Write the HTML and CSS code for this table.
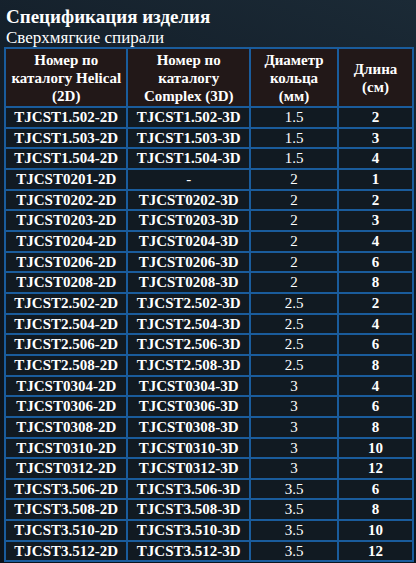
FILE: index.html
```html
<!DOCTYPE html>
<html lang="ru">
<head>
<meta charset="utf-8">
<link rel="stylesheet" href="styles.css">
</head>
<body>
<div class="page">
  <h1 class="title">Спецификация изделия</h1>
  <h2 class="subtitle">Сверхмягкие спирали</h2>
  <table class="spec">
    <thead>
      <tr>
        <th class="c1">Номер по каталогу Helical (2D)</th>
        <th class="c2">Номер по каталогу Complex (3D)</th>
        <th class="c3">Диаметр кольца (мм)</th>
        <th class="c4">Длина (см)</th>
      </tr>
    </thead>
    <tbody>
      <tr><td>TJCST1.502-2D</td><td>TJCST1.502-3D</td><td class="dia">1.5</td><td>2</td></tr>
      <tr><td>TJCST1.503-2D</td><td>TJCST1.503-3D</td><td class="dia">1.5</td><td>3</td></tr>
      <tr><td>TJCST1.504-2D</td><td>TJCST1.504-3D</td><td class="dia">1.5</td><td>4</td></tr>
      <tr><td>TJCST0201-2D</td><td class="dia">-</td><td class="dia">2</td><td>1</td></tr>
      <tr><td>TJCST0202-2D</td><td>TJCST0202-3D</td><td class="dia">2</td><td>2</td></tr>
      <tr><td>TJCST0203-2D</td><td>TJCST0203-3D</td><td class="dia">2</td><td>3</td></tr>
      <tr><td>TJCST0204-2D</td><td>TJCST0204-3D</td><td class="dia">2</td><td>4</td></tr>
      <tr><td>TJCST0206-2D</td><td>TJCST0206-3D</td><td class="dia">2</td><td>6</td></tr>
      <tr><td>TJCST0208-2D</td><td>TJCST0208-3D</td><td class="dia">2</td><td>8</td></tr>
      <tr><td>TJCST2.502-2D</td><td>TJCST2.502-3D</td><td class="dia">2.5</td><td>2</td></tr>
      <tr><td>TJCST2.504-2D</td><td>TJCST2.504-3D</td><td class="dia">2.5</td><td>4</td></tr>
      <tr><td>TJCST2.506-2D</td><td>TJCST2.506-3D</td><td class="dia">2.5</td><td>6</td></tr>
      <tr><td>TJCST2.508-2D</td><td>TJCST2.508-3D</td><td class="dia">2.5</td><td>8</td></tr>
      <tr><td>TJCST0304-2D</td><td>TJCST0304-3D</td><td class="dia">3</td><td>4</td></tr>
      <tr><td>TJCST0306-2D</td><td>TJCST0306-3D</td><td class="dia">3</td><td>6</td></tr>
      <tr><td>TJCST0308-2D</td><td>TJCST0308-3D</td><td class="dia">3</td><td>8</td></tr>
      <tr><td>TJCST0310-2D</td><td>TJCST0310-3D</td><td class="dia">3</td><td>10</td></tr>
      <tr><td>TJCST0312-2D</td><td>TJCST0312-3D</td><td class="dia">3</td><td>12</td></tr>
      <tr><td>TJCST3.506-2D</td><td>TJCST3.506-3D</td><td class="dia">3.5</td><td>6</td></tr>
      <tr><td>TJCST3.508-2D</td><td>TJCST3.508-3D</td><td class="dia">3.5</td><td>8</td></tr>
      <tr><td>TJCST3.510-2D</td><td>TJCST3.510-3D</td><td class="dia">3.5</td><td>10</td></tr>
      <tr><td>TJCST3.512-2D</td><td>TJCST3.512-3D</td><td class="dia">3.5</td><td>12</td></tr>
    </tbody>
  </table>
</div>
</body>
</html>
```
FILE: styles.css
```css
html, body {
  margin: 0;
  padding: 0;
}
body {
  width: 416px;
  height: 563px;
  overflow: hidden;
  background: linear-gradient(200deg, #1b2a36 0%, #0f1822 45%, #0b131b 100%);
  color: #ffffff;
  font-family: "Liberation Serif", "Times New Roman", serif;
}
.page {
  padding: 6px 2px 0 4px;
}
.title {
  margin: 0 0 0 2px;
  font-size: 19px;
  line-height: 22px;
  font-weight: bold;
}
.subtitle {
  margin: 0 0 0 2px;
  font-size: 17px;
  line-height: 19px;
  font-weight: normal;
}
.spec {
  border-collapse: collapse;
  width: 410px;
  border: 2px solid #1a5c9c;
  font-size: 15px;
  font-weight: bold;
}
.spec th, .spec td {
  border: 2px solid #1a5c9c;
  text-align: center;
  padding: 0 2px;
}
.spec th {
  background: #221818;
  line-height: 18px;
  padding: 2px 2px 1px;
  vertical-align: middle;
}
.spec td {
  background: #111a22;
  height: 17.65px;
  line-height: 17.65px;
  padding: 1px 2px 0;
}
.spec td.dia {
  font-weight: normal;
}
.c1 { width: 119px; }
.c2 { width: 119px; }
.c3 { width: 84px; }
.c4 { width: 71px; }
```
